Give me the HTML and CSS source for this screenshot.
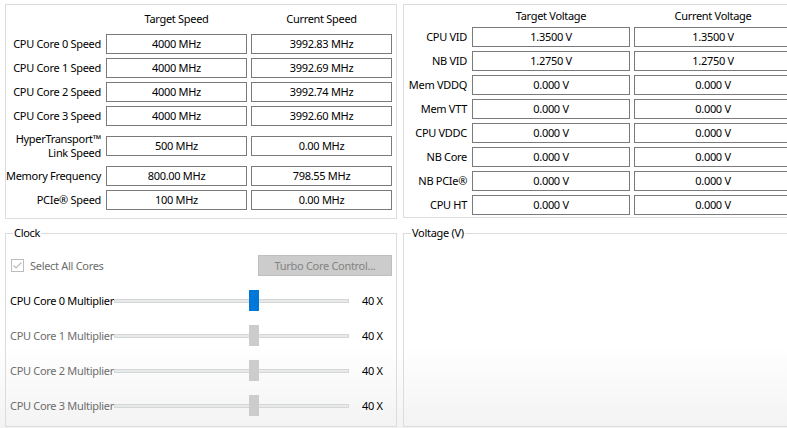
FILE: index.html
```html
<!DOCTYPE html>
<html>
<head>
<meta charset="utf-8">
<link rel="stylesheet" href="styles.css">
</head>
<body>
<div class="top">
  <div class="panel panel-speed">
    <div class="grid grid-speed">
      <div></div><div class="head">Target Speed</div><div class="head">Current Speed</div>
      <div class="lbl">CPU Core 0 Speed</div><div class="field">4000 MHz</div><div class="field">3992.83 MHz</div>
      <div class="lbl">CPU Core 1 Speed</div><div class="field">4000 MHz</div><div class="field">3992.69 MHz</div>
      <div class="lbl">CPU Core 2 Speed</div><div class="field">4000 MHz</div><div class="field">3992.74 MHz</div>
      <div class="lbl">CPU Core 3 Speed</div><div class="field">4000 MHz</div><div class="field">3992.60 MHz</div>
      <div class="lbl lbl-two">HyperTransport™<br>Link Speed</div><div class="field">500 MHz</div><div class="field">0.00 MHz</div>
      <div class="lbl">Memory Frequency</div><div class="field">800.00 MHz</div><div class="field">798.55 MHz</div>
      <div class="lbl">PCIe® Speed</div><div class="field">100 MHz</div><div class="field">0.00 MHz</div>
    </div>
  </div>
  <div class="panel panel-volt">
    <div class="grid grid-volt">
      <div></div><div class="head">Target Voltage</div><div class="head">Current Voltage</div>
      <div class="lbl">CPU VID</div><div class="field">1.3500 V</div><div class="field">1.3500 V</div>
      <div class="lbl">NB VID</div><div class="field">1.2750 V</div><div class="field">1.2750 V</div>
      <div class="lbl">Mem VDDQ</div><div class="field">0.000 V</div><div class="field">0.000 V</div>
      <div class="lbl">Mem VTT</div><div class="field">0.000 V</div><div class="field">0.000 V</div>
      <div class="lbl">CPU VDDC</div><div class="field">0.000 V</div><div class="field">0.000 V</div>
      <div class="lbl">NB Core</div><div class="field">0.000 V</div><div class="field">0.000 V</div>
      <div class="lbl">NB PCIe®</div><div class="field">0.000 V</div><div class="field">0.000 V</div>
      <div class="lbl">CPU HT</div><div class="field">0.000 V</div><div class="field">0.000 V</div>
    </div>
  </div>
</div>
<div class="bottom">
  <fieldset class="group group-clock">
    <legend>Clock</legend>
    <div class="clock-body">
      <div class="tool-row">
        <label class="check disabled">
          <svg class="checkbox" width="13" height="13" viewBox="0 0 13 13">
            <rect x="0.5" y="0.5" width="12" height="12" fill="#fff" stroke="#bcbcbc"/>
            <path d="M2.5 6.5 L5 9 L10.5 3.5" fill="none" stroke="#bcbcbc" stroke-width="1.2"/>
          </svg>
          <span>Select All Cores</span>
        </label>
        <div class="btn disabled-btn">Turbo Core Control...</div>
      </div>
      <div class="slider-row">
        <div class="slabel">CPU Core 0 Multiplier</div>
        <div class="slider"><div class="track"></div><div class="thumb thumb-active" style="left:135px"></div></div>
        <div class="sval">40 X</div>
      </div>
      <div class="slider-row dis">
        <div class="slabel">CPU Core 1 Multiplier</div>
        <div class="slider"><div class="track"></div><div class="thumb" style="left:135px"></div></div>
        <div class="sval">40 X</div>
      </div>
      <div class="slider-row dis">
        <div class="slabel">CPU Core 2 Multiplier</div>
        <div class="slider"><div class="track"></div><div class="thumb" style="left:135px"></div></div>
        <div class="sval">40 X</div>
      </div>
      <div class="slider-row dis">
        <div class="slabel">CPU Core 3 Multiplier</div>
        <div class="slider"><div class="track"></div><div class="thumb" style="left:135px"></div></div>
        <div class="sval">40 X</div>
      </div>
    </div>
  </fieldset>
  <fieldset class="group group-volt">
    <legend>Voltage (V)</legend>
  </fieldset>
</div>
</body>
</html>
```
FILE: styles.css
```css
html, body {
  margin: 0;
  padding: 0;
}
body {
  width: 787px;
  height: 428px;
  overflow: hidden;
  font-family: "Noto Sans", "Open Sans", sans-serif;
  font-size: 11px;
  letter-spacing: -0.3px;
  color: #000;
  background: linear-gradient(to bottom, #ffffff 0, #ffffff 345px, #f3f3f3 428px);
}
.top {
  display: flex;
  gap: 6px;
  padding: 4px 0 0 5px;
}
.panel {
  border: 1px solid #dcdcdc;
  box-sizing: border-box;
  width: 392px;
  flex-shrink: 0;
}
.panel-speed { height: 215px; }
.panel-volt { height: 214px; }
.grid {
  display: grid;
  column-gap: 4px;
  row-gap: 4px;
}
.grid-speed {
  grid-template-columns: 96px 141px 141px;
  grid-template-rows: 25px 20px 20px 20px 20px 32px 20px 20px;
}
.grid-volt {
  grid-template-columns: 64px 158px 158px;
  grid-template-rows: 18px repeat(8, 20px);
}
.head {
  text-align: center;
  line-height: 16px;
}
.grid-speed .head { padding-top: 6px; }
.grid-volt .head { padding-top: 3px; }
.lbl {
  text-align: right;
  padding-right: 1px;
  line-height: 16px;
  align-self: center;
  white-space: nowrap;
}
.lbl-two {
  line-height: 14px;
}
.field {
  border: 1px solid #7a7a7a;
  box-sizing: border-box;
  height: 20px;
  align-self: center;
  display: flex;
  align-items: center;
  justify-content: center;
  background: #fff;
  line-height: 16px;
  white-space: nowrap;
}
.bottom {
  display: flex;
  gap: 6px;
  padding: 6px 0 0 5px;
}
.group {
  margin: 0;
  padding: 0;
  border: 1px solid #dcdcdc;
  width: 392px;
  height: 202px;
  box-sizing: border-box;
  flex-shrink: 0;
  min-width: 0;
}
legend {
  margin-left: 7px;
  padding: 0 1px;
  line-height: 16px;
}
.clock-body {
  padding: 14px 4px 0 4px;
}
.tool-row {
  display: flex;
  align-items: center;
  height: 21px;
}
.check {
  display: flex;
  align-items: center;
  margin-left: 1px;
  gap: 6px;
}
.checkbox { display: block; }
.disabled { color: #6d6d6d; }
.btn {
  margin-left: auto;
  width: 134px;
  height: 21px;
  box-sizing: border-box;
  display: flex;
  align-items: center;
  justify-content: center;
}
.disabled-btn {
  background: #cccccc;
  border: 1px solid #bfbfbf;
  color: #838383;
}
.slider-row {
  display: grid;
  grid-template-columns: 104px 235px auto;
  align-items: center;
  height: 21px;
  margin-top: 14px;
}
.slider-row.dis .slabel { color: #6d6d6d; }
.slabel { white-space: nowrap; }
.slider {
  position: relative;
  height: 21px;
}
.track {
  position: absolute;
  left: 0;
  right: 0;
  top: 9px;
  height: 4px;
  box-sizing: border-box;
  background: #e7eaea;
  border: 1px solid #d6d6d6;
}
.thumb {
  position: absolute;
  top: 0;
  width: 10px;
  height: 21px;
  background: #cccccc;
}
.thumb-active { background: #0078d7; }
.sval {
  margin-left: 13px;
}
```
